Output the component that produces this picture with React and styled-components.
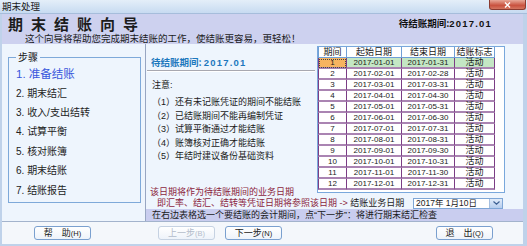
import styled, { createGlobalStyle } from "styled-components";

const GlobalStyle = createGlobalStyle`
  * { box-sizing: border-box; }
  html, body { margin: 0; padding: 0; background: #fff; }
  body {
    font-family: "Liberation Sans", "Noto Sans CJK SC", sans-serif;
    color: #1a1a1a;
  }
`;

const Window = styled.div`
  width: 527px;
  height: 246px;
  display: flex;
  flex-direction: column;
  background: #bfd2ea;
  overflow: hidden;
`;

const TitleBar = styled.div`
  height: 14px;
  flex: none;
  display: flex;
  justify-content: space-between;
  align-items: flex-start;
  padding-left: 2px;
  background: linear-gradient(#e4eef9, #c7dbf1);
  border-bottom: 1px solid #a6bddb;
  font-size: 9.5px;
  line-height: 13px;
`;

const CloseButton = styled.div`
  width: 37px;
  height: 10px;
  margin-right: 1px;
  border: 1px solid #8b3b30;
  border-top: none;
  border-radius: 0 0 3px 3px;
  background: linear-gradient(#e8a898, #c9523f 60%, #d47560);
  display: flex;
  align-items: center;
  justify-content: center;
`;

const Body = styled.div`
  flex: 1;
  display: flex;
  flex-direction: column;
  margin: 0 4px 2px 2px;
  min-height: 0;
`;

const Header = styled.div`
  height: 30px;
  flex: none;
  background: #cdd1ef;
  display: flex;
  flex-direction: column;
`;

const HeaderTop = styled.div`
  height: 17px;
  flex: none;
  display: flex;
  align-items: center;
  justify-content: space-between;
  padding: 2px 31px 0 6px;
`;

const WizardTitle = styled.h1`
  margin: 0;
  font-family: "Noto Sans CJK SC", sans-serif;
  font-weight: 700;
  font-size: 15px;
  line-height: 17px;
  letter-spacing: 8px;
  color: #1c1c1c;
`;

const PeriodLabel = styled.div`
  font-family: "Noto Sans CJK SC", sans-serif;
  font-weight: 700;
  font-size: 9.5px;
  line-height: 11px;
  color: ${({ $color }) => $color || "#111"};
  span {
    font-family: "Liberation Sans", sans-serif;
    letter-spacing: 1.2px;
  }
`;

const Subtitle = styled.div`
  padding: 3px 0 0 23px;
  font-size: 9.5px;
  line-height: 10px;
`;

const Main = styled.div`
  height: 177px;
  flex: none;
  display: flex;
`;

const StepsPanel = styled.div`
  width: 144px;
  flex: none;
  background: #eef5fd;
  border-right: 1px solid #98a6c2;
  padding: 7px 0 0 6px;
`;

const StepsBox = styled.fieldset`
  margin: 0;
  width: 133px;
  height: 152px;
  border: 1px solid #7ea9d9;
  padding: 0 0 0 7px;
`;

const StepsLegend = styled.legend`
  padding: 0 2px;
  font-family: "Noto Sans CJK SC", sans-serif;
  font-size: 10px;
  line-height: 12px;
`;

const StepList = styled.ol`
  list-style: none;
  margin: 0;
  padding: 0;
`;

const Step = styled.li`
  height: 19.4px;
  display: flex;
  align-items: center;
  font-size: ${({ $active }) => ($active ? "11.5px" : "10px")};
  color: ${({ $active }) => ($active ? "#3857dc" : "#222")};
`;

const RightColumn = styled.div`
  flex: 1;
  display: flex;
  flex-direction: column;
`;

const Content = styled.div`
  flex: 1;
  background: #eef5fd;
  display: grid;
  grid-template-columns: 170px 188px;
  grid-template-rows: 151px 12px;
  padding: 2px 18px 0 1px;
`;

const InfoColumn = styled.div`
  display: flex;
  flex-direction: column;
`;

const InfoHeading = styled.div`
  margin-top: 11px;
  padding: 0 0 2px 4px;
  border-bottom: 1px solid #a8a8b0;
  box-shadow: 0 1px 0 #fff;
  margin-right: 2px;
`;

const NoteTitle = styled.div`
  margin-top: 9px;
  padding-left: 5px;
  font-size: 9px;
  line-height: 11px;
`;

const NoteList = styled.ul`
  list-style: none;
  margin: 5px 0 0;
  padding-left: 5px;
`;

const Note = styled.li`
  font-size: 9px;
  line-height: 13.6px;
  white-space: nowrap;
`;

const Hint = styled.div`
  font-size: 9px;
  line-height: 10px;
  color: #8c1f40;
  white-space: nowrap;
`;

const HintFirst = styled(Hint)`
  margin-top: auto;
  padding-left: 3px;
`;

const BusinessDateRow = styled.div`
  grid-column: 1 / -1;
  display: flex;
  align-items: center;
  padding-left: 10px;
`;

const DateLabel = styled.span`
  color: #222;
`;

const DateCombo = styled.div`
  margin-left: auto;
  margin-right: 2px;
  width: 90px;
  height: 11px;
  border: 1px solid #7ea6d6;
  background: #fff;
  display: flex;
  align-items: center;
  font-size: 8.5px;
  line-height: 9px;
  padding-left: 2px;
`;

const ComboArrow = styled.div`
  margin-left: auto;
  width: 13px;
  height: 100%;
  border-left: 1px solid #a5bfe0;
  background: linear-gradient(#e2ecf9, #b6cdee);
  display: flex;
  align-items: center;
  justify-content: center;
`;

const TableBox = styled.div`
  width: 188px;
  height: 147px;
  border: 1px solid #79a8dc;
  background: #fff;
`;

const PeriodTable = styled.table`
  border-collapse: separate;
  border-spacing: 0;
  table-layout: fixed;
  width: 177px;
`;

const HeadCell = styled.th`
  width: ${({ $w }) => $w}px;
  height: 11px;
  padding: 0;
  font-family: "Noto Sans CJK SC", sans-serif;
  font-weight: 400;
  font-size: 9px;
  line-height: 10px;
  border-right: 1px solid #6fa0d6;
  border-bottom: 1px solid #6fa0d6;
  &:first-child { border-left: 1px solid #6fa0d6; }
`;

const Cell = styled.td`
  height: 11px;
  padding: 0;
  text-align: center;
  font-size: ${({ $cjk }) => ($cjk ? "9px" : "8px")};
  line-height: 9px;
  border-right: 1px solid #7b3d85;
  border-bottom: 2px solid #aa84b2;
  background: ${({ $bg }) => $bg || "#fff"};
  outline: ${({ $focus }) => ($focus ? "1px dotted #444" : "none")};
  outline-offset: -2px;
  &:first-child { border-left: 1px solid #7b3d85; }
`;

const StatusBar = styled.div`
  height: 12px;
  flex: none;
  background: #c9cdef;
  padding-left: 6px;
  font-size: 9px;
  line-height: 12px;
  white-space: nowrap;
`;

const Footer = styled.div`
  height: 23px;
  flex: none;
  display: flex;
  align-items: center;
  background: #f4f7fb;
  border-top: 1px solid #a3b3cc;
  padding: 0 30px 0 32px;
`;

const NavGroup = styled.div`
  display: flex;
  gap: 10px;
  margin-left: 67px;
  margin-right: auto;
`;

const WizardButton = styled.button`
  width: 57px;
  height: 14px;
  padding: 0;
  border: 1px solid ${({ disabled }) => (disabled ? "#c6d2e2" : "#7aa0cf")};
  border-radius: 3px;
  background: linear-gradient(#ffffff, #eef3fa);
  font-family: "Noto Sans CJK SC", sans-serif;
  font-size: 9px;
  line-height: 12px;
  color: ${({ disabled }) => (disabled ? "#b3bccb" : "#1a1a1a")};
  small {
    font-family: "Liberation Sans", sans-serif;
    font-size: 7.5px;
  }
`;

const periods = Array.from({ length: 12 }, (_, i) => {
  const m = String(i + 1).padStart(2, "0");
  const last = new Date(2017, i + 1, 0).getDate();
  return { id: i + 1, start: `2017-${m}-01`, end: `2017-${m}-${last}` };
});

const steps = ["准备结账", "期末结汇", "收入/支出结转", "试算平衡", "核对账簿", "期末结账", "结账报告"];

const notes = [
  "还有未记账凭证的期间不能结账",
  "已结账期间不能再编制凭证",
  "试算平衡通过才能结账",
  "账簿核对正确才能结账",
  "年结时建议备份基础资料",
];

export default function App() {
  return (
    <>
      <GlobalStyle />
      <Window>
        <TitleBar>
          期末处理
          <CloseButton>
            <svg width="9" height="6" viewBox="0 0 9 6">
              <path d="M2 0.5 L7 5.5 M7 0.5 L2 5.5" stroke="#fff" strokeWidth="1.4" />
            </svg>
          </CloseButton>
        </TitleBar>
        <Body>
          <Header>
            <HeaderTop>
              <WizardTitle>期末结账向导</WizardTitle>
              <PeriodLabel>
                待结账期间:<span>2017.01</span>
              </PeriodLabel>
            </HeaderTop>
            <Subtitle>这个向导将帮助您完成期末结账的工作，使结账更容易，更轻松！</Subtitle>
          </Header>
          <Main>
            <StepsPanel>
              <StepsBox>
                <StepsLegend>步骤</StepsLegend>
                <StepList>
                  {steps.map((s, i) => (
                    <Step key={s} $active={i === 0}>
                      {i + 1}. {s}
                    </Step>
                  ))}
                </StepList>
              </StepsBox>
            </StepsPanel>
            <RightColumn>
              <Content>
                <InfoColumn>
                  <InfoHeading>
                    <PeriodLabel $color="#1d78bd">
                      待结账期间: <span>2017.01</span>
                    </PeriodLabel>
                  </InfoHeading>
                  <NoteTitle>注意:</NoteTitle>
                  <NoteList>
                    {notes.map((n, i) => (
                      <Note key={n}>
                        （{i + 1}）{n}
                      </Note>
                    ))}
                  </NoteList>
                  <HintFirst>该日期将作为待结账期间的业务日期</HintFirst>
                </InfoColumn>
                <TableBox>
                  <PeriodTable>
                    <thead>
                      <tr>
                        <HeadCell $w={29}>期间</HeadCell>
                        <HeadCell $w={55}>起始日期</HeadCell>
                        <HeadCell $w={53}>结束日期</HeadCell>
                        <HeadCell $w={40}>结账标志</HeadCell>
                      </tr>
                    </thead>
                    <tbody>
                      {periods.map((p) => {
                        const sel = p.id === 1;
                        return (
                          <tr key={p.id}>
                            <Cell $bg={sel ? "#f7b460" : undefined} $focus={sel}>
                              {p.id}
                            </Cell>
                            <Cell $bg={sel ? "#c4e7c4" : undefined}>{p.start}</Cell>
                            <Cell $bg={sel ? "#c4e7c4" : undefined}>{p.end}</Cell>
                            <Cell $bg={sel ? "#c4e7c4" : undefined} $cjk>
                              活动
                            </Cell>
                          </tr>
                        );
                      })}
                    </tbody>
                  </PeriodTable>
                </TableBox>
                <BusinessDateRow>
                  <Hint>
                    即汇率、结汇、结转等凭证日期将参照该日期 -&gt; <DateLabel>结账业务日期</DateLabel>
                  </Hint>
                  <DateCombo>
                    2017年 1月10日
                    <ComboArrow>
                      <svg width="7" height="4" viewBox="0 0 7 4">
                        <path d="M0.5 0.5 L3.5 3.2 L6.5 0.5" fill="none" stroke="#3c5f92" strokeWidth="1.2" />
                      </svg>
                    </ComboArrow>
                  </DateCombo>
                </BusinessDateRow>
              </Content>
              <StatusBar>在右边表格选一个要结账的会计期间，点“下一步”：将进行期末结汇检查</StatusBar>
            </RightColumn>
          </Main>
          <Footer>
            <WizardButton>
              帮　助<small>(H)</small>
            </WizardButton>
            <NavGroup>
              <WizardButton disabled>
                上一步<small>(B)</small>
              </WizardButton>
              <WizardButton>
                下一步<small>(N)</small>
              </WizardButton>
            </NavGroup>
            <WizardButton>
              退　出<small>(Q)</small>
            </WizardButton>
          </Footer>
        </Body>
      </Window>
    </>
  );
}
